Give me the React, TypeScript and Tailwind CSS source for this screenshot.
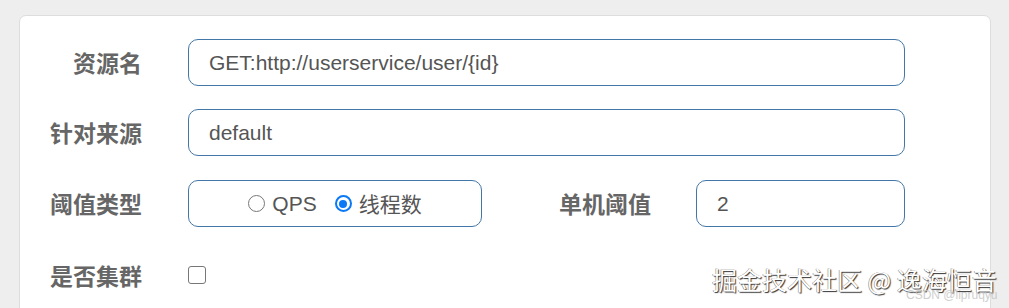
import React from 'react';

const cjk = { fontFamily: '"Noto Sans CJK SC", "Noto Sans", sans-serif' };
const latin = { fontFamily: '"Liberation Sans", "Noto Sans CJK SC", sans-serif' };

function Label({ children, width = 'w-[122px]' }: { children: React.ReactNode; width?: string }) {
  return (
    <div className={`${width} shrink-0 text-right text-[23px] font-bold text-[#666666]`} style={cjk}>
      {children}
    </div>
  );
}

function TextBox({ value, width }: { value: string; width: string }) {
  return (
    <div
      className={`${width} h-[47px] rounded-[10px] border border-[#4377a8] bg-white flex items-center px-[20px] text-[21px] text-[#555555]`}
      style={latin}
    >
      {value}
    </div>
  );
}

function Radio({ checked, label }: { checked?: boolean; label: string }) {
  return (
    <label className="flex items-center gap-[7px]">
      <span
        className={`w-[17px] h-[17px] rounded-full flex items-center justify-center ${
          checked ? 'border-[2.5px] border-[#0b78f5]' : 'border border-[#777777]'
        }`}
      >
        {checked && <span className="w-[8px] h-[8px] rounded-full bg-[#0b78f5]" />}
      </span>
      <span className="text-[21px] text-[#555555]" style={label === 'QPS' ? latin : cjk}>
        {label}
      </span>
    </label>
  );
}

export default function App() {
  return (
    <div className="relative w-[1009px] h-[308px] overflow-hidden bg-[#eeeeee] pt-[15px] pl-[19px]">
      <div className="w-[972px] h-[320px] bg-white border border-[#dddddd] rounded-[7px] pt-[23px] flex flex-col">
        <div className="flex items-center gap-[46px]">
          <Label>资源名</Label>
          <TextBox value="GET:http://userservice/user/{id}" width="w-[717px]" />
        </div>
        <div className="flex items-center gap-[46px] mt-[23px]">
          <Label>针对来源</Label>
          <TextBox value="default" width="w-[717px]" />
        </div>
        <div className="flex items-center mt-[24px]">
          <Label>阈值类型</Label>
          <div className="ml-[46px] w-[294px] h-[47px] rounded-[10px] border border-[#4377a8] flex items-center justify-center gap-[18px]">
            <Radio label="QPS" />
            <Radio checked label="线程数" />
          </div>
          <Label width="w-[169px]">单机阈值</Label>
          <div className="ml-[45px]">
            <TextBox value="2" width="w-[209px]" />
          </div>
        </div>
        <div className="flex items-center gap-[46px] mt-[31px]">
          <Label>是否集群</Label>
          <span className="w-[18px] h-[18px] rounded-[3px] border-[1.5px] border-[#777777] bg-white" />
        </div>
      </div>

      <div className="absolute left-[712px] top-[264px] whitespace-nowrap">
        <div
          className="text-[25px] text-white leading-[30px]"
          style={{ ...cjk, textShadow: '1px 1px 1px #333, -0.5px -0.5px 0.5px #777' }}
        >
          掘金技术社区 @ 逸海恒音
        </div>
        <div
          className="absolute left-[194px] top-[22px] text-[12px] text-[#c4c4c4] opacity-80"
          style={latin}
        >
          CSDN @lipruqyu
        </div>
      </div>
    </div>
  );
}
